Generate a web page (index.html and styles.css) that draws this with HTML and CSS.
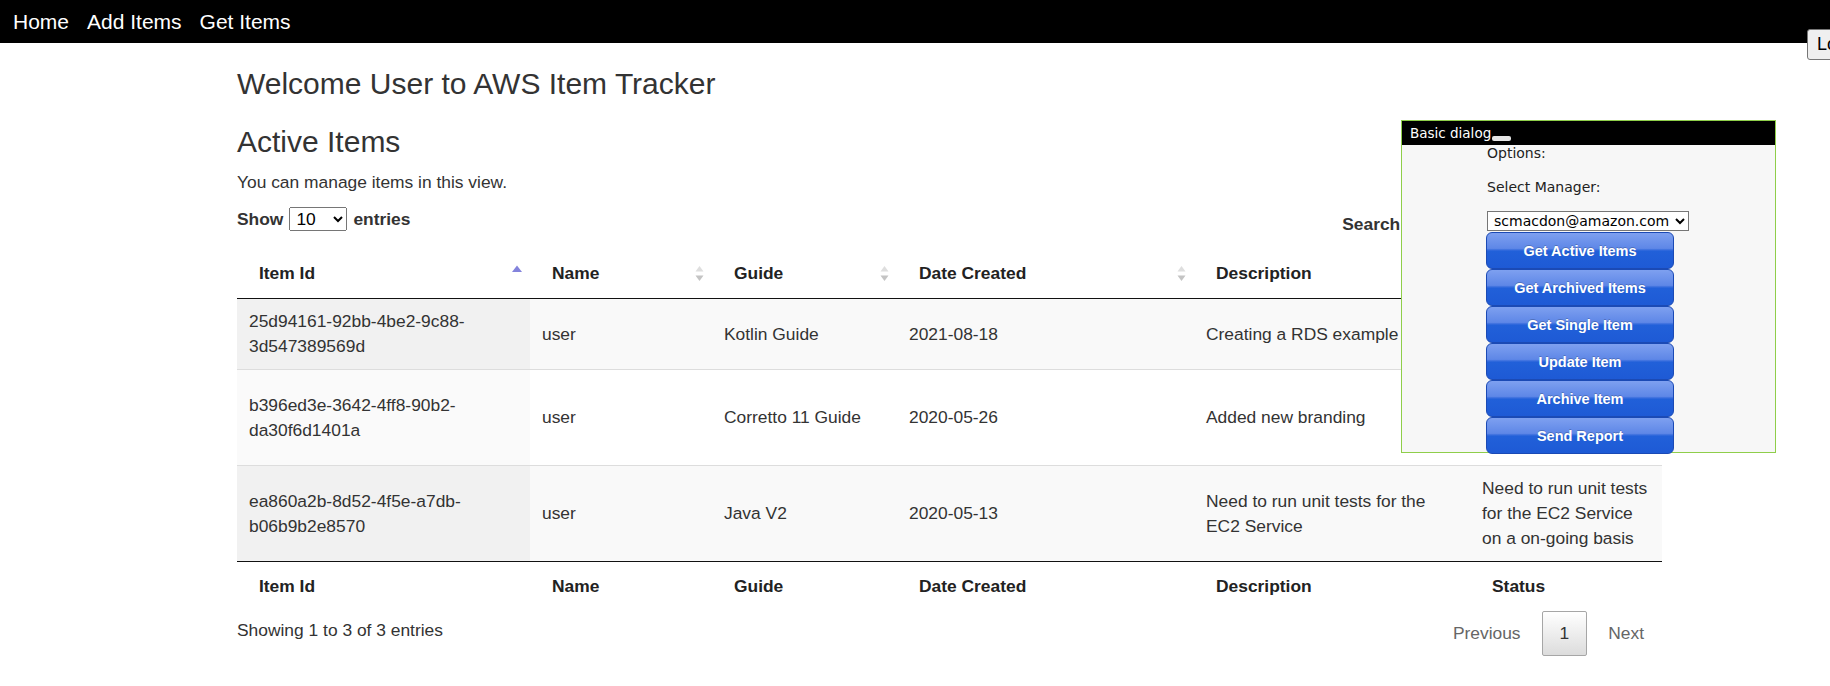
FILE: index.html
```html
<!DOCTYPE html>
<html lang="en">
<head>
<meta charset="utf-8">
<title>AWS Item Tracker</title>
<link rel="stylesheet" href="styles.css">
</head>
<body>
<nav class="topnav">
  <a href="#" class="topnav-link">Home</a>
  <a href="#" class="topnav-link">Add Items</a>
  <a href="#" class="topnav-link">Get Items</a>
</nav>
<button class="login-btn" type="button">Login</button>

<main class="container">
  <h2 class="page-title">Welcome User to AWS Item Tracker</h2>
  <h2 class="section-title">Active Items</h2>
  <p class="intro">You can manage items in this view.</p>

  <div class="table-controls">
    <label class="length">Show
      <select class="length-select"><option>10</option><option>25</option><option>50</option><option>100</option></select>
      entries</label>
    <label class="filter">Search:<input type="search" class="filter-input"></label>
  </div>

  <table class="items">
    <colgroup>
      <col class="c-id"><col class="c-name"><col class="c-guide"><col class="c-date"><col class="c-desc"><col class="c-status">
    </colgroup>
    <thead>
      <tr>
        <th>Item Id<svg class="sort-icon asc" width="10" height="17" viewBox="0 0 10 17"><path d="M5 0.5 L10 7 L0 7 Z" fill="#8383dc"/></svg></th>
        <th>Name<svg class="sort-icon" width="9" height="17" viewBox="0 0 9 17"><path d="M4.5 1 L8.5 6.5 L0.5 6.5 Z" fill="#dedede"/><path d="M0.5 10.5 L8.5 10.5 L4.5 16 Z" fill="#c4c4c4"/></svg></th>
        <th>Guide<svg class="sort-icon" width="9" height="17" viewBox="0 0 9 17"><path d="M4.5 1 L8.5 6.5 L0.5 6.5 Z" fill="#dedede"/><path d="M0.5 10.5 L8.5 10.5 L4.5 16 Z" fill="#c4c4c4"/></svg></th>
        <th>Date Created<svg class="sort-icon" width="9" height="17" viewBox="0 0 9 17"><path d="M4.5 1 L8.5 6.5 L0.5 6.5 Z" fill="#dedede"/><path d="M0.5 10.5 L8.5 10.5 L4.5 16 Z" fill="#c4c4c4"/></svg></th>
        <th>Description<svg class="sort-icon" width="9" height="17" viewBox="0 0 9 17"><path d="M4.5 1 L8.5 6.5 L0.5 6.5 Z" fill="#dedede"/><path d="M0.5 10.5 L8.5 10.5 L4.5 16 Z" fill="#c4c4c4"/></svg></th>
        <th>Status<svg class="sort-icon" width="9" height="17" viewBox="0 0 9 17"><path d="M4.5 1 L8.5 6.5 L0.5 6.5 Z" fill="#dedede"/><path d="M0.5 10.5 L8.5 10.5 L4.5 16 Z" fill="#c4c4c4"/></svg></th>
      </tr>
    </thead>
    <tbody>
      <tr class="odd">
        <td class="sorting">25d94161-92bb-4be2-9c88-3d547389569d</td>
        <td>user</td>
        <td>Kotlin Guide</td>
        <td>2021-08-18</td>
        <td>Creating a RDS example</td>
        <td>Creating a RDS example</td>
      </tr>
      <tr class="even">
        <td class="sorting">b396ed3e-3642-4ff8-90b2-da30f6d1401a</td>
        <td>user</td>
        <td>Corretto 11 Guide</td>
        <td>2020-05-26</td>
        <td>Added new branding</td>
        <td>Added new branding to the Corretto 11 Guide</td>
      </tr>
      <tr class="odd">
        <td class="sorting">ea860a2b-8d52-4f5e-a7db-b06b9b2e8570</td>
        <td>user</td>
        <td>Java V2</td>
        <td>2020-05-13</td>
        <td>Need to run unit tests for the EC2 Service</td>
        <td>Need to run unit tests for the EC2 Service on a on-going basis</td>
      </tr>
    </tbody>
    <tfoot>
      <tr>
        <th>Item Id</th><th>Name</th><th>Guide</th><th>Date Created</th><th>Description</th><th>Status</th>
      </tr>
    </tfoot>
  </table>

  <div class="table-bottom">
    <div class="info">Showing 1 to 3 of 3 entries</div>
    <div class="paginate">
      <a class="page-btn">Previous</a>
      <a class="page-btn current">1</a>
      <a class="page-btn">Next</a>
    </div>
  </div>
</main>

<div class="dialog">
  <div class="dialog-title">Basic dialog<span class="dialog-close"></span></div>
  <div class="dialog-body">
    <p class="dialog-label">Options:</p>
    <p class="dialog-label second">Select Manager:</p>
    <select class="manager-select"><option>scmacdon@amazon.com</option></select>
    <button class="action-btn first" type="button">Get Active Items</button>
    <button class="action-btn" type="button">Get Archived Items</button>
    <button class="action-btn" type="button">Get Single Item</button>
    <button class="action-btn" type="button">Update Item</button>
    <button class="action-btn" type="button">Archive Item</button>
    <button class="action-btn" type="button">Send Report</button>
  </div>
</div>
</body>
</html>
```

FILE: styles.css
```css
html, body {
  overflow-x: hidden;
}

body {
  margin: 0;
  font-family: "Liberation Sans", Arial, sans-serif;
  color: #333;
  background: #fff;
}

/* top navigation */
.topnav {
  background: #000;
  height: 43px;
  display: flex;
  align-items: center;
  gap: 18px;
  padding-left: 13px;
}

.topnav-link {
  color: #fff;
  text-decoration: none;
  font-size: 21px;
  line-height: 43px;
}

.login-btn {
  position: absolute;
  top: 29px;
  left: 1807px;
  font-family: "Liberation Sans", Arial, sans-serif;
  font-size: 18px;
  line-height: 21px;
  padding: 4px 9px;
  border: 1px solid #767676;
  border-radius: 3px;
  background: #efefef;
  color: #000;
  white-space: nowrap;
}

/* main content */
.container {
  margin-left: 237px;
  width: 1425px;
}

.page-title,
.section-title {
  font-size: 30px;
  font-weight: 500;
  line-height: 33px;
  margin: 24px 0 0;
  color: #333;
}

.section-title {
  margin-top: 25px;
}

.intro {
  font-size: 17.4px;
  line-height: 25px;
  margin: 12px 0 0;
}

.table-controls {
  display: flex;
  justify-content: space-between;
  align-items: flex-start;
  margin-top: 12px;
  font-size: 17.4px;
  font-weight: bold;
  line-height: 24px;
}

.length {
  display: flex;
  align-items: center;
  gap: 6px;
}

.length-select {
  font-family: "Liberation Sans", Arial, sans-serif;
  font-size: 17.4px;
  height: 24px;
  width: 58px;
  padding: 0 2px;
}

.filter {
  display: flex;
  align-items: center;
  gap: 8px;
  margin-top: 2px;
}

.filter-input {
  width: 248px;
  height: 30px;
  box-sizing: border-box;
  border: 1px solid #aaa;
  border-radius: 3px;
}

/* table */
.items {
  width: 1425px;
  table-layout: fixed;
  border-collapse: separate;
  border-spacing: 0;
  margin-top: 10px;
  font-size: 17.4px;
  line-height: 25px;
}

.c-id { width: 293px; }
.c-name { width: 182px; }
.c-guide { width: 185px; }
.c-date { width: 297px; }
.c-desc { width: 276px; }
.c-status { width: 192px; }

.items th {
  text-align: left;
  font-weight: bold;
  padding: 12px 22px;
  color: #222;
  position: relative;
}

.items thead th {
  border-bottom: 1px solid #111;
}

.items tfoot th {
  border-top: 1px solid #111;
}

.sort-icon {
  position: absolute;
  right: 8px;
  top: 50%;
  margin-top: -9px;
}

.sort-icon.asc {
  right: 8px;
}

.items td {
  padding: 10px 12px;
  border-top: 1px solid #ddd;
  vertical-align: middle;
}

.items tbody tr:first-child td {
  border-top: none;
}

.items tr.odd {
  background: #f9f9f9;
}

.items tr.even {
  background: #fff;
}

.items tr.odd td.sorting {
  background: #f1f1f1;
}

.items tr.even td.sorting {
  background: #fafafa;
}

.table-bottom {
  display: flex;
  justify-content: space-between;
  align-items: flex-start;
  font-size: 17.4px;
  line-height: 25px;
}

.info {
  padding-top: 7px;
}

.paginate {
  display: flex;
  gap: 3px;
}

.page-btn {
  padding: 9px 17px;
  border: 1px solid transparent;
  border-radius: 2px;
  color: #666;
}

.page-btn.current {
  border-color: #a6a6a6;
  background: linear-gradient(to bottom, #fff 0%, #dcdcdc 100%);
  color: #333;
}

/* dialog */
.dialog {
  position: absolute;
  left: 1401px;
  top: 120px;
  width: 373px;
  height: 331px;
  border: 1px solid #8fce4a;
  background: #f7f7f7;
  font-family: "DejaVu Sans", Verdana, sans-serif;
}

.dialog-title {
  height: 24px;
  line-height: 24px;
  background: #000;
  color: #fff;
  font-size: 13.5px;
  padding-left: 8px;
}

.dialog-close {
  display: inline-block;
  width: 19px;
  height: 5px;
  background: #e6e6e6;
  border-radius: 2px;
  vertical-align: -3px;
  margin-left: 1px;
}

.dialog-body {
  padding-left: 85px;
  font-size: 14px;
  color: #222;
}

.dialog-label {
  margin: 0;
  line-height: 17px;
}

.dialog-label.second {
  margin-top: 17px;
}

.manager-select {
  display: block;
  margin-top: 15px;
  width: 202px;
  height: 20px;
  font-family: "DejaVu Sans", Verdana, sans-serif;
  font-size: 14px;
  padding: 0 2px;
  background: #fff;
}

.action-btn {
  display: block;
  box-sizing: border-box;
  width: 188px;
  height: 37px;
  margin-left: -1px;
  border: 1px solid #1b4ab5;
  border-radius: 6px;
  background: linear-gradient(to bottom, #7ea0f0 0%, #5e87e7 44%, #3b6fde 48%, #2160d9 52%, #1e5ad5 100%);
  color: #fff;
  font-family: "Liberation Sans", Arial, sans-serif;
  font-weight: bold;
  font-size: 14.5px;
  text-shadow: 0 -1px 0 rgba(0, 0, 0, 0.2);
  padding: 0;
}

.action-btn.first {
  margin-top: 1px;
}
```
